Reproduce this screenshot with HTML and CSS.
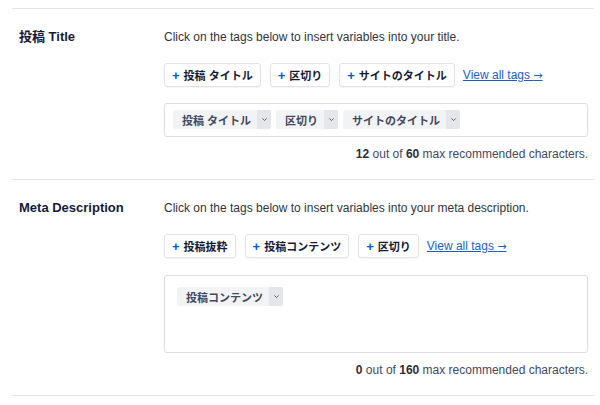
FILE: index.html
```html
<!DOCTYPE html>
<html lang="ja">
<head>
<meta charset="utf-8">
<link rel="stylesheet" href="styles.css">
</head>
<body>
<div class="page">
  <div class="section">
    <div class="label">投稿 Title</div>
    <div class="content">
      <p class="desc">Click on the tags below to insert variables into your title.</p>
      <div class="tags">
        <button class="tag"><span class="plus">+</span>投稿 タイトル</button>
        <button class="tag"><span class="plus">+</span>区切り</button>
        <button class="tag"><span class="plus">+</span>サイトのタイトル</button>
        <a class="view-all" href="#">View all tags <span class="arrow">→</span></a>
      </div>
      <div class="field field-line">
        <span class="chip"><span class="chip-text">投稿 タイトル</span><span class="chip-caret"><svg viewBox="0 0 10 10" width="9" height="9"><path d="M2.6 3.8 L5 6.2 L7.4 3.8" fill="none" stroke="#5d616d" stroke-width="1.1"/></svg></span></span>
        <span class="chip"><span class="chip-text">区切り</span><span class="chip-caret"><svg viewBox="0 0 10 10" width="9" height="9"><path d="M2.6 3.8 L5 6.2 L7.4 3.8" fill="none" stroke="#5d616d" stroke-width="1.1"/></svg></span></span>
        <span class="chip"><span class="chip-text">サイトのタイトル</span><span class="chip-caret"><svg viewBox="0 0 10 10" width="9" height="9"><path d="M2.6 3.8 L5 6.2 L7.4 3.8" fill="none" stroke="#5d616d" stroke-width="1.1"/></svg></span></span>
      </div>
      <p class="count"><b>12</b> out of <b>60</b> max recommended characters.</p>
    </div>
  </div>
  <div class="section">
    <div class="label">Meta Description</div>
    <div class="content">
      <p class="desc">Click on the tags below to insert variables into your meta description.</p>
      <div class="tags">
        <button class="tag"><span class="plus">+</span>投稿抜粋</button>
        <button class="tag"><span class="plus">+</span>投稿コンテンツ</button>
        <button class="tag"><span class="plus">+</span>区切り</button>
        <a class="view-all" href="#">View all tags <span class="arrow">→</span></a>
      </div>
      <div class="field field-area">
        <span class="chip"><span class="chip-text">投稿コンテンツ</span><span class="chip-caret"><svg viewBox="0 0 10 10" width="9" height="9"><path d="M2.6 3.8 L5 6.2 L7.4 3.8" fill="none" stroke="#5d616d" stroke-width="1.1"/></svg></span></span>
      </div>
      <p class="count"><b>0</b> out of <b>160</b> max recommended characters.</p>
    </div>
  </div>
</div>
</body>
</html>
```
FILE: styles.css
```css
* { box-sizing: border-box; }
html, body { margin: 0; padding: 0; background: #fff; }
body {
  font-family: "Liberation Sans", "Noto Sans CJK JP", sans-serif;
  color: #141b38;
  -webkit-font-smoothing: antialiased;
}
.page {
  padding: 8px 6px 0 12px;
}
.section {
  display: flex;
  border-top: 1px solid #e4e5ea;
  padding: 20px 6px 18px 7px;
}
.section:last-child { border-bottom: 1px solid #e4e5ea; }
.label {
  width: 145px;
  flex: none;
  font-size: 13px;
  line-height: 16px;
  font-weight: 700;
  color: #141b38;
}
.content { flex: 1; min-width: 0; }
.desc {
  margin: 0;
  font-size: 12px;
  line-height: 16px;
  color: #2f3440;
}
.tags {
  display: flex;
  align-items: center;
  gap: 9px;
  margin-top: 18px;
}
.tag {
  height: 24px;
  padding: 0 7px 0 7px;
  border: 1px solid #e1e3e8;
  border-radius: 3px;
  background: #fff;
  font-family: "Liberation Sans", "Noto Sans CJK JP", sans-serif;
  font-size: 11px;
  font-weight: 700;
  color: #141b38;
  display: flex;
  align-items: center;
  box-shadow: 0 1px 1px rgba(0,0,0,0.04);
}
.plus {
  color: #005ae0;
  font-weight: 700;
  margin-right: 4px;
  font-size: 13px;
}
.view-all {
  font-size: 12px;
  color: #1a5fc8;
  text-decoration: underline;
  margin-left: -1px;
}
.arrow { font-family: "DejaVu Sans", sans-serif; font-size: 11px; }
.field {
  margin-top: 16px;
  border: 1px solid #dcdde2;
  border-radius: 3px;
  display: flex;
  align-items: flex-start;
  gap: 5px;
}
.field-line { height: 34px; padding: 6px 8px; }
.field-area { height: 78px; padding: 11px 12px; margin-top: 17px; }
.chip {
  display: inline-flex;
  height: 19px;
  background: #f2f3f5;
  border-radius: 2px;
  font-size: 11px;
  font-weight: 700;
  color: #434960;
}
.chip-text {
  display: flex;
  align-items: center;
  padding: 0 6px 0 9px;
}
.chip-caret {
  width: 14px;
  background: #e5e6ea;
  display: flex;
  align-items: center;
  justify-content: center;
  border-radius: 0 2px 2px 0;
}
.count {
  margin: 10px 0 0;
  text-align: right;
  font-size: 12px;
  line-height: 14px;
  color: #434960;
}
.count b { color: #2b2f3a; }
```
